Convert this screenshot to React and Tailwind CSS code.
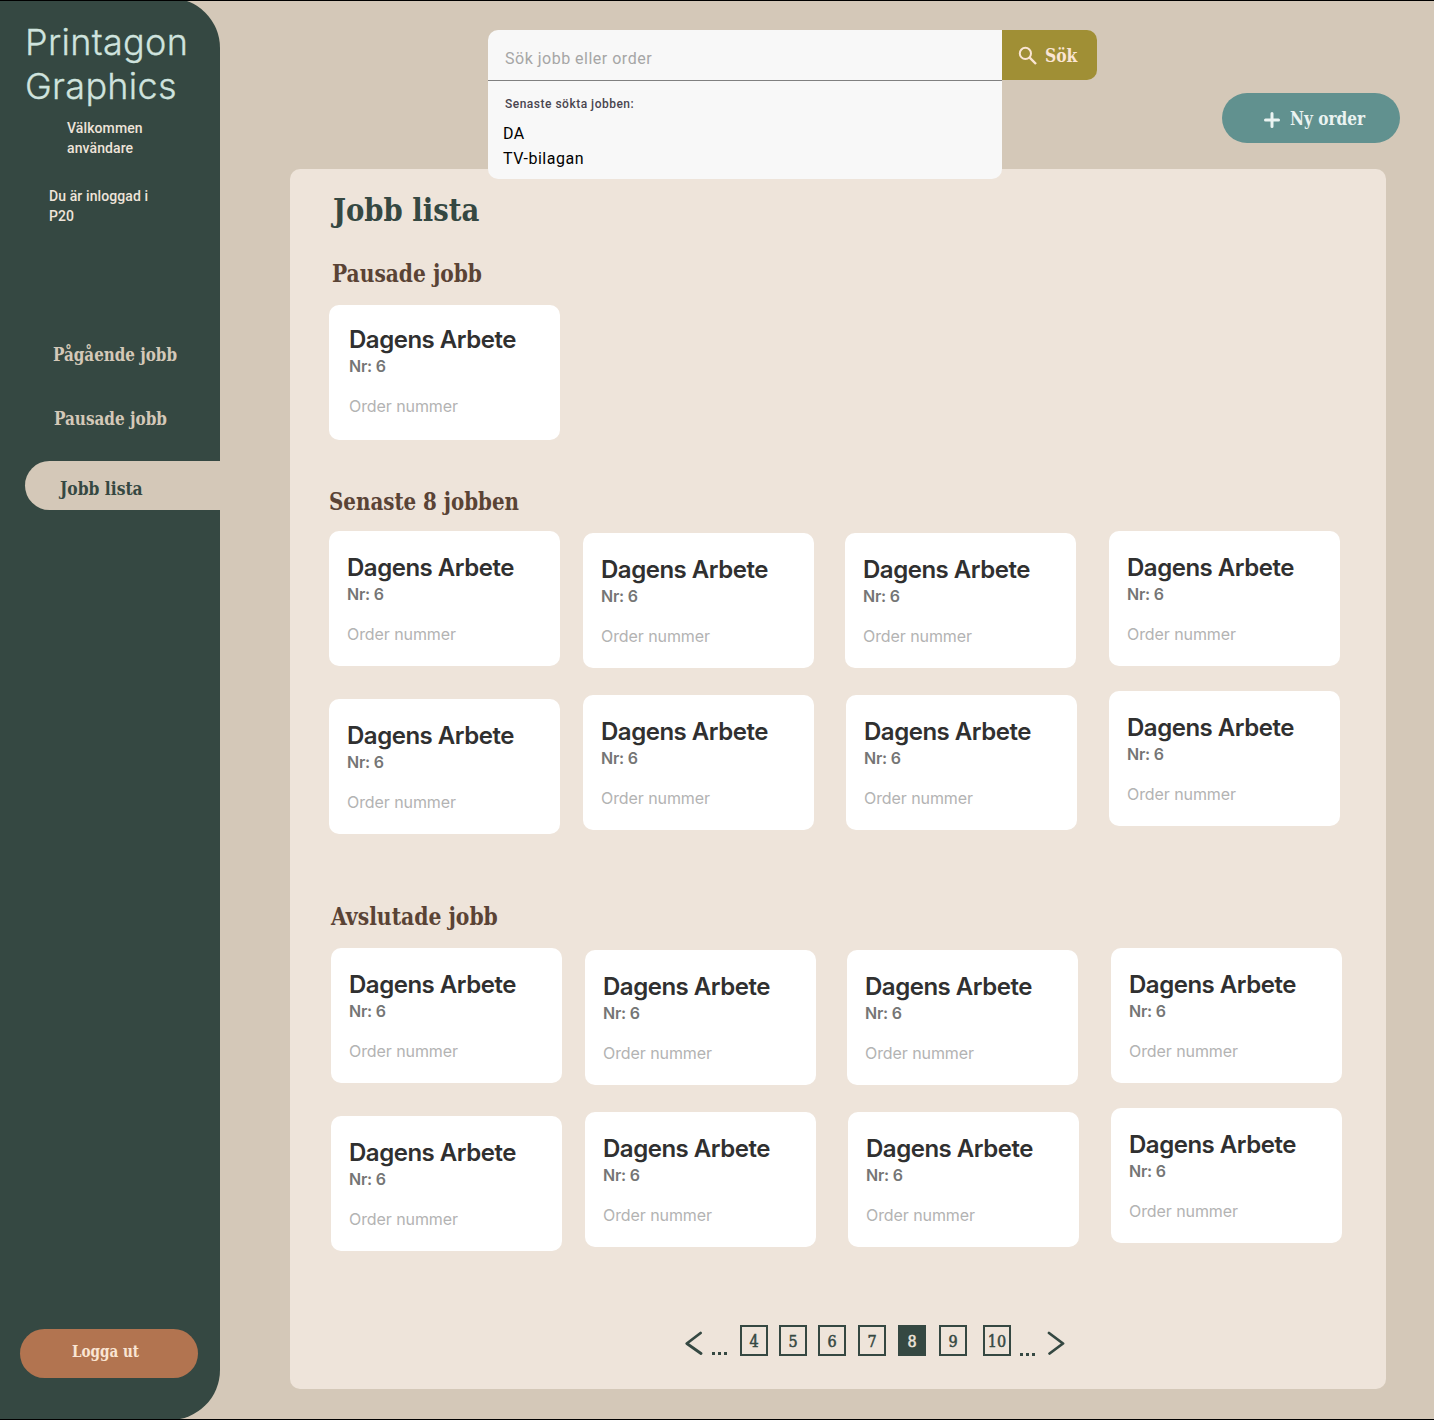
const slab = "font-['Roboto_Slab','DejaVu_Serif_Condensed','DejaVu_Serif',serif] [font-stretch:75%] whitespace-nowrap origin-left";

function Card({ className = "", pad = "pl-[18px] pt-[22px]" }) {
  return (
    <div className={`h-[135px] w-[231px] shrink-0 rounded-[10px] bg-white ${pad} ${className}`}>
      <h3 className="text-2xl leading-[29px] font-semibold tracking-[-0.02em] text-[#303030]">Dagens Arbete</h3>
      <p className="text-base leading-6 font-semibold tracking-[-0.2px] text-[#757575]">Nr: 6</p>
      <p className="mt-4 text-base leading-6 tracking-[-0.08px] text-[#b3b3b3]">Order nummer</p>
    </div>
  );
}

function JobColumns() {
  return (
    <div className="flex">
      <div className="flex flex-col gap-[33px]">
        <Card />
        <Card />
      </div>
      <div className="mt-0.5 ml-[23px] flex flex-col gap-[27px]">
        <Card />
        <Card />
      </div>
      <div className="mt-0.5 ml-[31px] flex flex-col gap-[27px]">
        <Card />
        <Card className="ml-px" />
      </div>
      <div className="ml-8 flex flex-col gap-[25px]">
        <Card />
        <Card />
      </div>
    </div>
  );
}

function PageBox({ children, active = false, className = "" }) {
  return (
    <button
      className={`flex h-[31px] w-7 items-center justify-center border-2 border-[#354842] pt-0.5 text-base ${slab} ${active ? "bg-[#354842] text-[#eee4da]" : "text-[#354842]"} ${className}`}
    >
      <span className="inline-block [-webkit-text-stroke:0.5px_currentColor]">{children}</span>
    </button>
  );
}

function Dots({ className = "" }) {
  return (
    <span className={`flex gap-[3px] ${className}`}>
      <i className="size-[3px] bg-[#354842]" />
      <i className="size-[3px] bg-[#354842]" />
      <i className="size-[3px] bg-[#354842]" />
    </span>
  );
}

function Sidebar() {
  return (
    <aside className="-mt-[3px] flex h-[1422px] w-[220px] shrink-0 flex-col rounded-r-[50px] bg-[#354842]">
      <h1 className="mt-[22px] ml-[25px] text-4xl leading-[44px] font-light tracking-[0.3px] text-[#cfe3de] [-webkit-text-stroke:0.3px_currentColor]">
        Printagon
        <br />
        Graphics
      </h1>
      <p className="mt-[10px] ml-[67px] font-[Roboto] text-sm leading-5 font-medium tracking-[0.1px] text-[#eee4da]">
        Välkommen
        <br />
        användare
      </p>
      <p className="mt-7 ml-[49px] font-[Roboto] text-sm leading-5 font-medium tracking-[0.1px] text-[#eee4da]">
        Du är inloggad i<br />
        P20
      </p>
      <nav className={`mt-[117px] flex flex-col text-lg leading-6 font-bold text-[#d4c8b8] ${slab}`}>
        <a className="ml-[53px] origin-left scale-x-[0.935]">Pågående jobb</a>
        <a className="mt-10 ml-[54px] origin-left scale-x-[0.94]">Pausade jobb</a>
        <a className="mt-[30px] ml-[25px] flex h-[49px] items-center rounded-l-full bg-[#d4c8b8] pt-[6px] pl-[35px] text-[#354842]">
          <span className="origin-left scale-x-[0.96]">Jobb lista</span>
        </a>
      </nav>
      <button className={`mt-auto mb-[42px] ml-5 flex h-[49px] w-[178px] items-center rounded-full bg-[#b27450] pb-1 pl-[52px] text-base font-bold text-[#fae5d3] ${slab}`}>
        <span className="origin-left scale-x-[0.94]">Logga ut</span>
      </button>
    </aside>
  );
}

function Search() {
  return (
    <div className="relative z-10 ml-[268px] flex h-[50px] items-start">
      <div className="h-[149px] w-[514px] shrink-0 rounded-[10px] rounded-tr-none bg-[#f8f8f8] font-[Roboto]">
        <div className="flex h-[51px] items-center border-b border-[#808080] pt-[7px] pl-[17px] text-base tracking-[0.5px] text-[#a6a6a6]">
          Sök jobb eller order
        </div>
        <p className="mt-[15px] pl-[17px] text-xs leading-4 font-medium tracking-[0.5px] text-[#49454f]">Senaste sökta jobben:</p>
        <ul className="mt-[9px] pl-[15px] text-base leading-[25px] tracking-[0.5px] text-black">
          <li>DA</li>
          <li>TV-bilagan</li>
        </ul>
      </div>
      <button className={`flex h-[50px] w-[95px] items-center rounded-r-[10px] bg-[#a08f35] pt-0.5 pl-4 text-lg font-bold text-[#fae5d3] ${slab}`}>
        <svg className="size-5" viewBox="0 0 20 20" fill="none" stroke="currentColor" strokeWidth="2">
          <circle cx="7.4" cy="7.4" r="5.6" />
          <path d="M11.2 11.2L18 18" strokeWidth="2.4" />
        </svg>
        <span className="ml-[7px] origin-left scale-x-[0.96]">Sök</span>
      </button>
    </div>
  );
}

export default function App() {
  return (
    <div className="flex h-[1420px] w-[1434px] overflow-hidden border-y border-black bg-[#d4c8b8] font-[Inter,sans-serif]">
      <Sidebar />
      <div className="flex flex-1 flex-col pt-[29px]">
        <Search />
        <button className={`mt-[13px] mr-[34px] flex h-[50px] w-[178px] items-center self-end rounded-full bg-[#61918f] pt-0.5 pl-[42px] text-lg font-bold text-[#eaf3f1] ${slab}`}>
          <svg className="mt-px size-4" viewBox="0 0 16 16" stroke="currentColor" strokeWidth="3" strokeLinecap="round">
            <path d="M8 1.5V14.5M1.5 8H14.5" />
          </svg>
          <span className="ml-[10px] origin-left scale-x-[0.945]">Ny order</span>
        </button>
        <main className="mt-[26px] ml-[70px] flex h-[1220px] w-[1096px] flex-col rounded-[10px] bg-[#eee4da]">
          <h2 className={`mt-[21px] ml-[43px] text-[32px] leading-10 font-bold text-[#354842] ${slab}`}>
            <span className="inline-block origin-left scale-x-[0.955]">Jobb lista</span>
          </h2>
          <h3 className={`mt-7 ml-[42px] text-2xl leading-8 font-bold text-[#5a4335] ${slab}`}>
            <span className="inline-block origin-left scale-x-[0.936]">Pausade jobb</span>
          </h3>
          <Card className="mt-[15px] ml-[39px]" pad="pl-5 pt-5" />
          <h3 className={`mt-[46px] ml-[39px] text-2xl leading-8 font-bold text-[#5a4335] ${slab}`}>
            <span className="inline-block origin-left scale-x-[0.919]">Senaste 8 jobben</span>
          </h3>
          <div className="mt-[13px] ml-[39px]">
            <JobColumns />
          </div>
          <h3 className={`mt-[67px] ml-[41px] text-2xl leading-8 font-bold text-[#5a4335] ${slab}`}>
            <span className="inline-block origin-left scale-x-[0.942]">Avslutade jobb</span>
          </h3>
          <div className="mt-[15px] ml-[41px]">
            <JobColumns />
          </div>
          <div className="mt-[74px] ml-[395px] flex h-[31px] items-start text-[#354842]">
            <svg className="mt-[6px] h-6 w-[18px]" viewBox="0 0 18 24" fill="none" stroke="currentColor" strokeWidth="2.8" strokeLinecap="round" strokeLinejoin="round">
              <path d="M15.6 2L1.8 12.5L16 22.5" />
            </svg>
            <Dots className="mt-[27px] ml-[9px]" />
            <PageBox className="ml-[13px]">4</PageBox>
            <PageBox className="ml-[11px]">5</PageBox>
            <PageBox className="ml-[11px]">6</PageBox>
            <PageBox className="ml-3">7</PageBox>
            <PageBox active className="ml-3">8</PageBox>
            <PageBox className="ml-[13px]">9</PageBox>
            <PageBox className="ml-4">10</PageBox>
            <Dots className="mt-7 ml-[9px]" />
            <svg className="mt-[6px] ml-3 h-6 w-[18px]" viewBox="0 0 18 24" fill="none" stroke="currentColor" strokeWidth="2.8" strokeLinecap="round" strokeLinejoin="round">
              <path d="M2 2L16 12.5L2.6 22.5" />
            </svg>
          </div>
        </main>
      </div>
    </div>
  );
}
